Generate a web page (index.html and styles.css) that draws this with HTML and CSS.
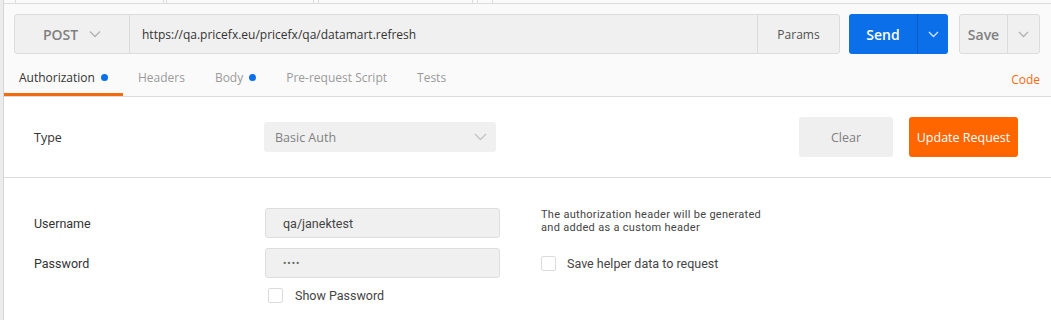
FILE: index.html
```html
<!DOCTYPE html>
<html lang="en">
<head>
    <meta charset="UTF-8">
    <title>Request - Authorization</title>
    <link rel="stylesheet" href="styles.css">
</head>
<body>
    <div class="app">
        <div class="sidebar-edge"></div>
        <div class="main">
            <div class="tab-strip">
                <span class="strip-tab t1"></span>
                <span class="strip-tab t2"></span>
                <span class="strip-tab t3"></span>
                <span class="strip-tab t4"></span>
            </div>

            <div class="request-area">
                <div class="request-bar">
                    <div class="url-group">
                        <div class="method">
                            POST
                            <svg class="chev" width="12" height="8" viewBox="0 0 12 8"><path d="M1 1.5l5 5 5-5" fill="none" stroke="#b3b3b3" stroke-width="1.4"/></svg>
                        </div>
                        <div class="url">https://qa.pricefx.eu/pricefx/qa/datamart.refresh</div>
                        <div class="params">Params</div>
                    </div>
                    <div class="send-btn">
                        <span class="send-label">Send</span>
                        <span class="send-drop">
                            <svg width="11" height="7" viewBox="0 0 11 7"><path d="M1 1l4.5 4.5L10 1" fill="none" stroke="#cfe2ff" stroke-width="1.4"/></svg>
                        </span>
                    </div>
                    <div class="save-btn">
                        <span class="save-label">Save</span>
                        <span class="save-drop">
                            <svg width="11" height="7" viewBox="0 0 11 7"><path d="M1 1l4.5 4.5L10 1" fill="none" stroke="#b3b3b3" stroke-width="1.4"/></svg>
                        </span>
                    </div>
                </div>

                <div class="tabs">
                    <div class="tab active">Authorization <span class="dot"></span></div>
                    <div class="tab">Headers</div>
                    <div class="tab">Body <span class="dot"></span></div>
                    <div class="tab">Pre-request Script</div>
                    <div class="tab">Tests</div>
                    <div class="code-link">Code</div>
                </div>
            </div>

            <div class="type-row">
                <div class="type-label">Type</div>
                <div class="type-select">
                    Basic Auth
                    <svg width="13" height="8" viewBox="0 0 13 8"><path d="M1 1l5.5 5.5L12 1" fill="none" stroke="#c4c4c4" stroke-width="1.3"/></svg>
                </div>
                <div class="type-actions">
                    <button class="btn-clear">Clear</button>
                    <button class="btn-update">Update Request</button>
                </div>
            </div>

            <div class="auth-form">
                <div class="form-label">Username</div>
                <div class="form-input">qa/janektest</div>
                <div class="help-text">The authorization header will be generated<br>and added as a custom header</div>

                <div class="form-label">Password</div>
                <div class="form-input pw">&bull;&bull;&bull;&bull;</div>
                <label class="check"><span class="box"></span>Save helper data to request</label>

                <div></div>
                <label class="check show-pw"><span class="box"></span>Show Password</label>
            </div>
        </div>
    </div>
</body>
</html>
```

FILE: styles.css
```css
* {
    margin: 0;
    padding: 0;
    box-sizing: border-box;
}

body {
    font-family: 'Open Sans', sans-serif;
    background: #fff;
    color: #333;
    width: 1051px;
    height: 320px;
    overflow: hidden;
}

.app {
    display: flex;
    height: 320px;
}

.sidebar-edge {
    width: 4px;
    background: #ececec;
    border-right: 1px solid #d6d6d6;
}

.main {
    flex: 1;
    display: flex;
    flex-direction: column;
}

/* tab strip above the request */
.tab-strip {
    height: 4px;
    background: #fafafa;
    border-bottom: 1px solid #dcdcdc;
    position: relative;
}

.strip-tab {
    position: absolute;
    top: 0;
    height: 3px;
    border-left: 1px solid #dcdcdc;
    border-right: 1px solid #dcdcdc;
}

.strip-tab.t1 { left: 11px; width: 149px; }
.strip-tab.t2 { left: 162px; width: 148px; }
.strip-tab.t3 { left: 314px; width: 155px; }
.strip-tab.t4 { left: 473px; width: 16px; }

.request-area {
    background: #fafafa;
    border-bottom: 1px solid #dcdcdc;
    padding: 10px 11px 0 10px;
}

.request-bar {
    display: flex;
    height: 40px;
}

.url-group {
    flex: 1;
    display: flex;
    background: #f0f0f0;
    border: 1px solid #dcdcdc;
    border-radius: 3px;
}

.method {
    width: 115px;
    display: flex;
    align-items: center;
    justify-content: center;
    gap: 11px;
    font-size: 14px;
    font-weight: 600;
    color: #808080;
    border-right: 1px solid #dcdcdc;
}

.url {
    flex: 1;
    display: flex;
    align-items: center;
    padding-left: 12px;
    font-size: 12px;
    color: #333;
}

.params {
    width: 82px;
    display: flex;
    align-items: center;
    justify-content: center;
    border-left: 1px solid #dcdcdc;
    font-size: 12px;
    color: #505050;
}

.send-btn {
    width: 99px;
    margin-left: 9px;
    display: flex;
    background: #0a6fe8;
    border-radius: 3px;
    color: #fff;
}

.send-label {
    flex: 1;
    display: flex;
    align-items: center;
    justify-content: center;
    font-size: 14px;
    font-weight: 600;
}

.send-drop {
    width: 31px;
    display: flex;
    align-items: center;
    justify-content: center;
    border-left: 1px solid #0a5cc4;
}

.save-btn {
    width: 81px;
    margin-left: 11px;
    display: flex;
    background: #f0f0f0;
    border: 1px solid #dcdcdc;
    border-radius: 3px;
}

.save-label {
    flex: 1;
    display: flex;
    align-items: center;
    justify-content: center;
    font-size: 14px;
    font-weight: 600;
    color: #808080;
}

.save-drop {
    width: 32px;
    display: flex;
    align-items: center;
    justify-content: center;
    border-left: 1px solid #dcdcdc;
}

.tabs {
    display: flex;
    align-items: stretch;
    height: 42px;
    margin-left: -10px;
}

.tab {
    display: flex;
    align-items: center;
    gap: 6px;
    padding: 7px 15px 0;
    font-size: 12px;
    color: #9a9a9a;
    border-bottom: 3px solid transparent;
}

.tab.active {
    color: #333;
    border-bottom-color: #f26b0d;
}

.dot {
    width: 7px;
    height: 7px;
    border-radius: 50%;
    background: #0a6fe8;
}

.code-link {
    margin-left: auto;
    display: flex;
    align-items: center;
    padding-top: 9px;
    font-size: 12px;
    color: #f26b0d;
}

/* auth type */
.type-row {
    display: flex;
    align-items: center;
    height: 81px;
    padding: 0 33px 0 30px;
    border-bottom: 1px solid #dcdcdc;
}

.type-label {
    width: 230px;
    font-size: 12.5px;
    color: #333;
}

.type-select {
    width: 232px;
    height: 30px;
    display: flex;
    align-items: center;
    justify-content: space-between;
    padding: 0 9px 0 11px;
    background: #f0f0f0;
    border-radius: 3px;
    font-size: 12.5px;
    color: #808080;
}

.type-actions {
    margin-left: auto;
    display: flex;
    gap: 16px;
}

.type-actions button {
    height: 40px;
    border: none;
    border-radius: 3px;
    font-family: 'Open Sans', sans-serif;
    font-size: 12.5px;
}

.btn-clear {
    width: 94px;
    background: #efefef;
    color: #808080;
}

.btn-update {
    width: 109px;
    background: #ff6600;
    color: #fff;
}

/* username / password */
.auth-form {
    display: grid;
    grid-template-columns: 190px 235px auto;
    column-gap: 41px;
    row-gap: 10px;
    align-items: center;
    padding: 30px 0 0 30px;
    font-family: Roboto, 'Liberation Sans', sans-serif;
}

.form-label {
    font-size: 12.5px;
    color: #333;
}

.form-input {
    height: 30px;
    display: flex;
    align-items: center;
    padding-left: 17px;
    background: #f0f0f0;
    border: 1px solid #dedede;
    border-radius: 3px;
    font-size: 12.5px;
    color: #444;
}

.form-input.pw {
    font-size: 10px;
    letter-spacing: 1px;
    color: #666;
}

.help-text {
    font-size: 11px;
    letter-spacing: 0.3px;
    line-height: 13px;
    color: #444;
    align-self: start;
}

.check {
    display: flex;
    align-items: center;
    gap: 11px;
    font-size: 12.5px;
    color: #444;
}

.box {
    width: 15px;
    height: 15px;
    border: 1px solid #dcdcdc;
    border-radius: 2px;
    background: #fff;
}

.show-pw {
    margin-left: 3px;
    gap: 12px;
}
```
